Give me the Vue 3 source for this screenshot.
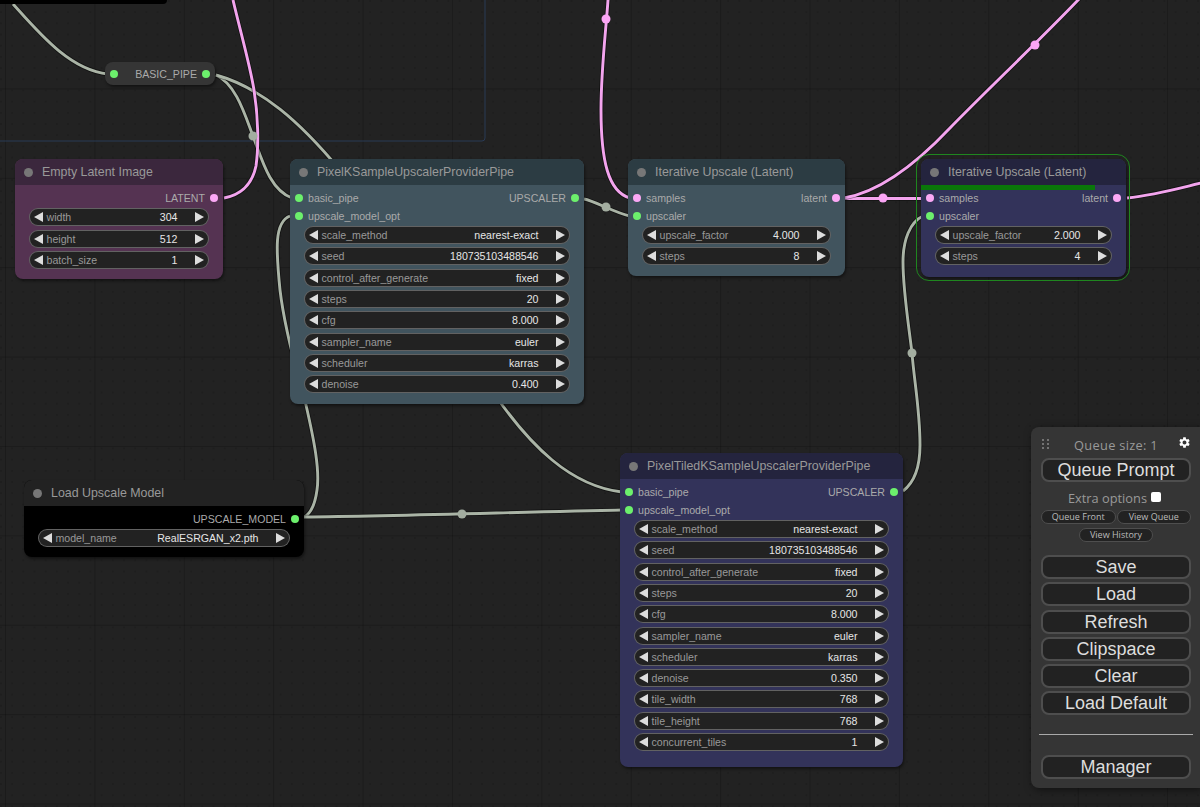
<script setup>
const kSamplerWidgets = (denoise) => [
  ['scale_method', 'nearest-exact'],
  ['seed', '180735103488546'],
  ['control_after_generate', 'fixed'],
  ['steps', '20'],
  ['cfg', '8.000'],
  ['sampler_name', 'euler'],
  ['scheduler', 'karras'],
  ['denoise', denoise],
]

const G = '#6cf06c'
const P = '#fba8f5'

const nodes = [
  { id: 'pipe', tone: 'plain', x: 105, y: 62, w: 110, h: 23, inputs: [{ name: '', color: G }], outputs: [{ name: 'BASIC_PIPE', color: G }], widgets: [] },
  {
    id: 'latent', title: 'Empty Latent Image', tone: 'purple', x: 15, y: 159, w: 208, h: 120,
    inputs: [], outputs: [{ name: 'LATENT', color: P }],
    widgets: [['width', '304'], ['height', '512'], ['batch_size', '1']],
  },
  {
    id: 'ksampler', title: 'PixelKSampleUpscalerProviderPipe', tone: 'teal', x: 290, y: 159, w: 294, h: 245,
    inputs: [{ name: 'basic_pipe', color: G }, { name: 'upscale_model_opt', color: G }],
    outputs: [{ name: 'UPSCALER', color: G }],
    widgets: kSamplerWidgets('0.400'),
  },
  {
    id: 'iter1', title: 'Iterative Upscale (Latent)', tone: 'teal', x: 628, y: 159, w: 217, h: 117,
    inputs: [{ name: 'samples', color: P }, { name: 'upscaler', color: G }],
    outputs: [{ name: 'latent', color: P }],
    widgets: [['upscale_factor', '4.000'], ['steps', '8']],
  },
  {
    id: 'iter2', title: 'Iterative Upscale (Latent)', tone: 'blue', x: 921, y: 159, w: 205, h: 118, running: true,
    inputs: [{ name: 'samples', color: P }, { name: 'upscaler', color: G }],
    outputs: [{ name: 'latent', color: P }],
    widgets: [['upscale_factor', '2.000'], ['steps', '4']],
  },
  {
    id: 'loader', title: 'Load Upscale Model', tone: 'black', x: 24, y: 480, w: 280, h: 77,
    inputs: [], outputs: [{ name: 'UPSCALE_MODEL', color: G }],
    widgets: [['model_name', 'RealESRGAN_x2.pth']],
  },
  {
    id: 'tiled', title: 'PixelTiledKSampleUpscalerProviderPipe', tone: 'blue', x: 620, y: 453, w: 283, h: 314,
    inputs: [{ name: 'basic_pipe', color: G }, { name: 'upscale_model_opt', color: G }],
    outputs: [{ name: 'UPSCALER', color: G }],
    widgets: [...kSamplerWidgets('0.350'), ['tile_width', '768'], ['tile_height', '768'], ['concurrent_tiles', '1']],
  },
]

const wires = [
  { color: 'gray', d: 'M13 4 C40 34 70 70 108 74' },
  { color: 'gray', d: 'M216 75 C236 84 245 115 253 136 C262 160 270 190 292 198' },
  { color: 'gray', d: 'M216 75 C262 88 300 122 340 170 L495 395 C530 445 570 486 622 492' },
  { color: 'gray', d: 'M290 216 C274 222 276 250 280 290 C286 340 300 380 306 405 C314 440 320 470 317 490 C315 505 310 514 304 517' },
  { color: 'gray', d: 'M304 517 C400 516 520 512 622 510' },
  { color: 'gray', d: 'M584 199 C595 201 615 213 630 216' },
  { color: 'gray', d: 'M903 491 C915 482 920 465 920 445 C920 410 914 380 912 353 C908 320 903 290 903 262 C903 240 910 222 923 216' },
  { color: 'pink', d: 'M233 0 C240 30 250 65 254 90 C258 115 259 145 256 166 C252 185 240 195 224 198' },
  { color: 'pink', d: 'M608 0 C606 30 601 70 601 110 C601 160 608 192 630 198' },
  { color: 'pink', d: 'M844 198.5 L922 198.5' },
  { color: 'pink', d: 'M844 198 C880 192 915 165 950 128 C985 92 1040 40 1080 -2' },
  { color: 'pink', d: 'M1127 198 C1155 195 1180 188 1201 183' },
]

const knots = [
  { color: 'gray', x: 253, y: 136 },
  { color: 'gray', x: 606, y: 207 },
  { color: 'gray', x: 462, y: 514 },
  { color: 'gray', x: 912, y: 353 },
  { color: 'pink', x: 606, y: 19 },
  { color: 'pink', x: 883, y: 198 },
  { color: 'pink', x: 1035, y: 45 },
]

const mainButtons = ['Save', 'Load', 'Refresh', 'Clipspace', 'Clear', 'Load Default']
</script>

<template>
  <div class="canvas">
    <svg class="wires" width="1200" height="807" viewBox="0 0 1200 807">
      <path d="M0 141 H482 Q485 141 485 138 V0" class="group" />
      <g v-for="w in wires" :key="w.d">
        <path :d="w.d" class="wire-shadow" />
        <path :d="w.d" class="wire" :class="w.color" />
      </g>
      <circle v-for="k in knots" :key="k.x" :cx="k.x" :cy="k.y" r="4.5" :class="'knot-' + k.color" />
    </svg>

    <div class="top-node"></div>

    <div
      v-for="n in nodes"
      :key="n.id"
      class="node"
      :class="['tone-' + n.tone, { running: n.running }]"
      :style="{ left: n.x + 'px', top: n.y + 'px', width: n.w + 'px', height: n.h + 'px' }"
    >
      <div v-if="n.title" class="title">
        <span class="title-dot"></span>
        <span>{{ n.title }}</span>
      </div>
      <div v-if="n.running" class="progress"></div>
      <div class="slots">
        <div class="slot-col">
          <div v-for="s in n.inputs" :key="s.name" class="slot">
            <span class="socket" :style="{ background: s.color }"></span>
            <span>{{ s.name }}</span>
          </div>
        </div>
        <div class="slot-col">
          <div v-for="s in n.outputs" :key="s.name" class="slot">
            <span>{{ s.name }}</span>
            <span class="socket" :style="{ background: s.color }"></span>
          </div>
        </div>
      </div>
      <div v-if="n.widgets.length" class="widgets">
        <div v-for="w in n.widgets" :key="w[0]" class="widget">
          <span class="arrow left"></span>
          <span class="w-name">{{ w[0] }}</span>
          <span class="w-value">{{ w[1] }}</span>
          <span class="arrow right"></span>
        </div>
      </div>
    </div>

    <aside class="menu">
      <div class="menu-head">
        <span class="drag">
          <i v-for="i in 6" :key="i"></i>
        </span>
        <span class="queue-size">Queue size: 1</span>
        <svg class="gear" viewBox="0 0 24 24" width="13" height="13">
          <path fill="#fff" d="M19.14 12.94c.04-.3.06-.61.06-.94 0-.32-.02-.64-.07-.94l2.03-1.58a.49.49 0 0 0 .12-.61l-1.92-3.32a.488.488 0 0 0-.59-.22l-2.39.96c-.5-.38-1.03-.7-1.62-.94l-.36-2.54a.484.484 0 0 0-.48-.41h-3.84c-.24 0-.43.17-.47.41l-.36 2.54c-.59.24-1.13.57-1.62.94l-2.39-.96c-.22-.08-.47 0-.59.22L2.74 8.87c-.12.21-.08.47.12.61l2.03 1.58c-.05.3-.09.63-.09.94s.02.64.07.94l-2.03 1.58a.49.49 0 0 0-.12.61l1.92 3.32c.12.22.37.29.59.22l2.39-.96c.5.38 1.03.7 1.62.94l.36 2.54c.05.24.24.41.48.41h3.84c.24 0 .44-.17.47-.41l.36-2.54c.59-.24 1.13-.56 1.62-.94l2.39.96c.22.08.47 0 .59-.22l1.92-3.32c.12-.22.07-.47-.12-.61l-2.01-1.58zM12 15.6c-1.98 0-3.6-1.62-3.6-3.6s1.62-3.6 3.6-3.6 3.6 1.62 3.6 3.6-1.62 3.6-3.6 3.6z" />
        </svg>
      </div>
      <button class="btn">Queue Prompt</button>
      <label class="extra">Extra options <span class="check"></span></label>
      <div class="small-row">
        <button class="btn small">Queue Front</button>
        <button class="btn small">View Queue</button>
      </div>
      <div class="small-row center">
        <button class="btn small history">View History</button>
      </div>
      <div class="stack">
        <button v-for="b in mainButtons" :key="b" class="btn">{{ b }}</button>
      </div>
      <hr class="divider" />
      <button class="btn">Manager</button>
    </aside>
  </div>
</template>

<style>
html, body {
  margin: 0;
  background: #222;
  overflow: hidden;
}
</style>

<style scoped>
.canvas {
  position: relative;
  width: 1200px;
  height: 807px;
  overflow: hidden;
  background-color: #222;
  background-image:
    linear-gradient(to right, rgba(0, 0, 0, 0.2) 1px, transparent 1px),
    linear-gradient(to bottom, rgba(0, 0, 0, 0.2) 1px, transparent 1px),
    radial-gradient(circle at 1px 1px, rgba(0, 0, 0, 0.12) 1px, transparent 1.2px);
  background-size: 89.4px 89.4px, 89.4px 89.4px, 11.2px 11.2px;
  background-position: 5px 0, 0 -1px, 0 0;
  font-family: "Liberation Sans", Arial, sans-serif;
}

.wires {
  position: absolute;
  inset: 0;
}

.group {
  fill: none;
  stroke: #293a55;
  stroke-width: 1;
}

.wire-shadow {
  fill: none;
  stroke: rgba(0, 0, 0, 0.45);
  stroke-width: 4.6;
}

.wire {
  fill: none;
  stroke-width: 2.9;
}

.wire.gray {
  stroke: #aab4a6;
}

.wire.pink {
  stroke: #f3a4ee;
}

.knot-gray {
  fill: #a3ada0;
}

.knot-pink {
  fill: #fba5f5;
}

.top-node {
  position: absolute;
  left: 0;
  top: 0;
  width: 167px;
  height: 4px;
  background: #000;
  border-radius: 0 0 6px 0;
}

.node {
  position: absolute;
  box-sizing: border-box;
  border-radius: 8px;
  box-shadow: 1px 2px 3px rgba(0, 0, 0, 0.45);
  background: var(--body);
  display: flex;
  flex-direction: column;
  font-size: 10.6px;
  color: #aaa;
}

.tone-plain {
  --body: #353535;
  justify-content: center;
}

.tone-purple {
  --body: #553352;
  --head: #3b273d;
}

.tone-teal {
  --body: #41545e;
  --head: #2c3c43;
}

.tone-blue {
  --body: #33335a;
  --head: #24243e;
}

.tone-black {
  --body: #000;
  --head: #222;
}

.running::after {
  content: "";
  position: absolute;
  inset: -5px -4px -4px -5.5px;
  border: 1.5px solid #1f861f;
  border-radius: 13px;
  pointer-events: none;
}

.title {
  height: 26px;
  flex: none;
  display: flex;
  align-items: center;
  gap: 9px;
  padding-left: 9px;
  box-sizing: border-box;
  background: var(--head);
  border-radius: 8px 8px 0 0;
  color: #999;
  font-size: 12.4px;
}

.title-dot {
  width: 9px;
  height: 9px;
  border-radius: 50%;
  background: #777;
}

.progress {
  position: absolute;
  left: 0;
  top: 26px;
  width: 174px;
  height: 5px;
  background: #0a770a;
}

.slots {
  display: flex;
  justify-content: space-between;
  padding: 4.7px 5px 0;
}

.tone-plain .slots {
  padding-top: 0;
}

.slot {
  display: flex;
  align-items: center;
  gap: 5px;
  height: 17.6px;
}

.slot-col:last-child .slot {
  justify-content: flex-end;
}

.socket {
  width: 8px;
  height: 8px;
  border-radius: 50%;
}

.widgets {
  display: flex;
  flex-direction: column;
  gap: 3.3px;
  margin: 1.2px 14.5px 0 13.5px;
}

.widget {
  height: 18px;
  box-sizing: border-box;
  display: flex;
  align-items: center;
  padding: 0 4px;
  background: #222;
  border: 1px solid rgba(125, 125, 125, 0.7);
  border-radius: 9px;
}

.w-name {
  margin-left: 4px;
  color: #999;
}

.w-value {
  margin-left: auto;
  margin-right: 17px;
  color: #e6e6e6;
}

.arrow {
  width: 0;
  height: 0;
  flex: none;
  border-top: 5px solid transparent;
  border-bottom: 5px solid transparent;
}

.arrow.left {
  border-right: 9px solid #ddd;
}

.arrow.right {
  border-left: 9px solid #ddd;
}

.menu {
  position: absolute;
  left: 1031px;
  top: 427px;
  width: 169px;
  height: 361px;
  box-sizing: border-box;
  padding: 0 9px 0 10px;
  background: #353535;
  border-radius: 8px 0 0 8px;
  box-shadow: 2px 2px 8px rgba(0, 0, 0, 0.5);
  display: flex;
  flex-direction: column;
  color: #999;
  font-family: "Open Sans", "Liberation Sans", sans-serif;
}

.menu-head {
  position: relative;
  height: 31px;
  flex: none;
  display: flex;
  align-items: center;
  justify-content: center;
  font-size: 12.8px;
}

.queue-size {
  margin-top: 4px;
  letter-spacing: 0.3px;
}

.drag {
  position: absolute;
  left: 0.5px;
  top: 12px;
  width: 8px;
  display: grid;
  grid-template-columns: 2px 2px;
  gap: 2px 3px;
}

.drag i {
  width: 2px;
  height: 2px;
  background: #888;
  border-radius: 50%;
}

.gear {
  position: absolute;
  right: 0;
  top: 8.5px;
}

.btn {
  display: block;
  width: 100%;
  height: 24px;
  padding: 0;
  box-sizing: border-box;
  background: #222;
  color: #ddd;
  border: 2px solid #4e4e4e;
  border-radius: 8px;
  font-family: "Liberation Sans", Arial, sans-serif;
  font-size: 18px;
  line-height: 18px;
}

.extra {
  height: 28px;
  padding-top: 3px;
  box-sizing: border-box;
  display: flex;
  align-items: center;
  justify-content: center;
  gap: 4px;
  font-size: 12.8px;
  margin-left: -3px;
}

.check {
  width: 10px;
  height: 10px;
  background: #fff;
  border-radius: 2px;
  margin-top: -1px;
}

.small-row {
  display: flex;
  justify-content: space-between;
  gap: 1px;
  margin-bottom: 4px;
}

.small-row.center {
  justify-content: center;
  margin-bottom: 13px;
}

.btn.small {
  flex: 1;
  height: 14px;
  border-width: 1.5px;
  font-size: 9px;
  line-height: 10px;
  color: #bbb;
  font-family: "Open Sans", sans-serif;
  border-radius: 7px;
}

.btn.history {
  flex: none;
  width: 74px;
}

.stack {
  display: flex;
  flex-direction: column;
  gap: 3.3px;
}

.divider {
  width: 154px;
  margin: 19px -1px 20px -2px;
  border: 0;
  border-top: 1px solid #aaa;
  box-sizing: content-box;
}
</style>
